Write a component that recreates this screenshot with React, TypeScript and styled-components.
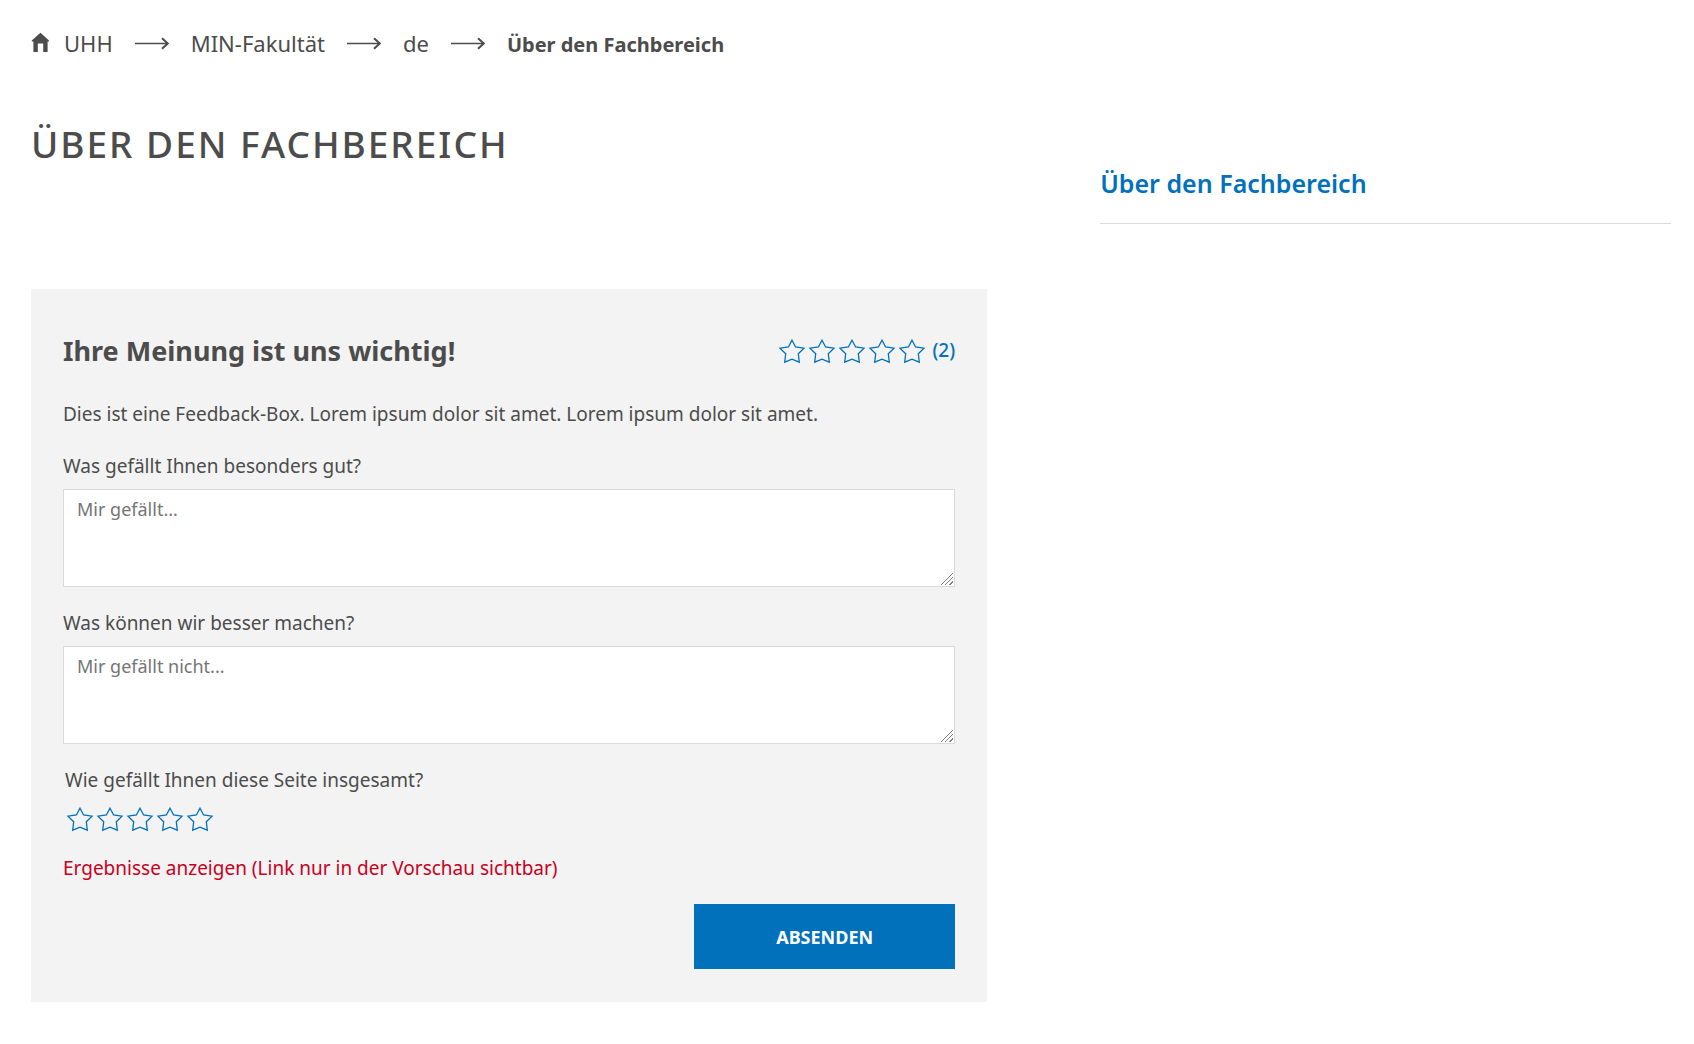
import React, { useState } from "react";
import styled, { createGlobalStyle } from "styled-components";

const color = {
  text: "#4c4c4c",
  blue: "#0271bb",
  red: "#c8001e",
  panel: "#f3f3f3",
  line: "#dadada",
  placeholder: "#757575",
};

const GlobalStyle = createGlobalStyle`
  *, *::before, *::after { box-sizing: border-box; }
  body {
    margin: 0;
    background: #fff;
    color: ${color.text};
    font-family: "Noto Sans", "Open Sans", sans-serif;
    font-size: 19px;
    line-height: 26px;
  }
`;

const Page = styled.div`
  padding: 27px 23px 42px 31px;
`;

const Breadcrumb = styled.nav`
  margin-bottom: 60px;
`;

const Crumbs = styled.ol`
  display: flex;
  flex-wrap: wrap;
  gap: 22px;
  margin: 0;
  padding: 0;
  list-style: none;
  font-size: 22px;
  line-height: 32px;
`;

const Crumb = styled.li`
  display: flex;
  align-items: center;
  gap: 22px;
`;

const CrumbLink = styled.a`
  display: flex;
  align-items: center;
  gap: 15px;
  color: inherit;
  text-decoration: none;
`;

const CurrentCrumb = styled.strong`
  font-size: 20px;
  line-height: 20px;
  font-weight: 700;
`;

const Icon = styled.svg`
  display: block;
  flex: none;
`;

const Columns = styled.div`
  display: grid;
  grid-template-columns: minmax(0, 67fr) minmax(0, 40fr);
  column-gap: 113px;
  align-items: start;
`;

const Title = styled.h1`
  margin: 0 0 120px;
  font-size: 37px;
  line-height: 50px;
  font-weight: 500;
  letter-spacing: 2px;
  text-transform: uppercase;
`;

const SideNav = styled.nav`
  padding-top: 48px;
`;

const SideLink = styled.a`
  display: block;
  padding-bottom: 24px;
  border-bottom: 1px solid ${color.line};
  color: ${color.blue};
  font-size: 25px;
  line-height: 32px;
  font-weight: 600;
  text-decoration: none;
`;

const FeedbackBox = styled.section`
  padding: 42px 32px 33px;
  background: ${color.panel};
`;

const BoxHeader = styled.header`
  display: flex;
  justify-content: space-between;
  align-items: center;
  margin-bottom: 30px;
`;

const BoxTitle = styled.h2`
  margin: 0;
  font-size: 27px;
  line-height: 40px;
  font-weight: 700;
`;

const Rating = styled.div`
  display: flex;
  align-items: center;
  height: 38px;
  padding-bottom: 2px;
  color: ${color.blue};
  font-weight: 500;
`;

const RatingCount = styled.span`
  margin-left: 5px;
`;

const Intro = styled.p`
  margin: 0 0 26px;
`;

const Form = styled.form`
  display: flex;
  flex-direction: column;
  align-items: stretch;
  gap: 23px;
`;

const Field = styled.div`
  display: flex;
  flex-direction: column;
  gap: 10px;
`;

const TextArea = styled.textarea`
  display: block;
  width: 100%;
  height: 98px;
  padding: 6px 13px;
  border: 1px solid ${color.line};
  border-radius: 0;
  background: #fff;
  color: ${color.text};
  font-family: inherit;
  font-size: 18px;
  line-height: 26px;
  resize: both;

  &::placeholder { color: ${color.placeholder}; }

  &::-webkit-resizer {
    background:
      linear-gradient(135deg, #fff 48%, transparent 48%),
      repeating-linear-gradient(315deg, #fff 0 2px, #808080 2px 3px);
    border: solid #fff;
    border-width: 0 1px 1px 0;
  }
`;

const StarField = styled.fieldset`
  margin: 0;
  padding: 0 2px;
  border: 0;
`;

const StarLegend = styled.legend`
  padding: 0;
  margin-bottom: 10px;
`;

const StarRow = styled.div`
  display: flex;
  height: 29px;
  color: ${color.blue};
`;

const StarOption = styled.label`
  position: relative;
  cursor: pointer;
`;

const StarInput = styled.input`
  position: absolute;
  inset: 0;
  width: 100%;
  height: 100%;
  margin: 0;
  opacity: 0;
  cursor: pointer;
`;

const ResultsLink = styled.a`
  align-self: flex-start;
  color: ${color.red};
  text-decoration: none;
`;

const SubmitButton = styled.button`
  align-self: flex-end;
  width: 261px;
  height: 65px;
  padding: 0;
  border: 0;
  background: ${color.blue};
  color: #fff;
  font-family: inherit;
  font-size: 18px;
  font-weight: 700;
  line-height: 26px;
  text-transform: uppercase;
  cursor: pointer;
`;

const HomeIcon = () => (
  <Icon width="18" height="22" viewBox="0 0 18 22" fill="currentColor" aria-hidden="true">
    <path d="M9.5 0.8 18.2 8.6V9.6H16.6V20H12.2V11.4H6.8V20H2.4V9.6H0.8V8.6Z" />
  </Icon>
);

const ArrowIcon = () => (
  <Icon width="34" height="14" viewBox="0 0 34 14" fill="none" stroke="currentColor" aria-hidden="true">
    <path d="M0 7.5H32.5" strokeWidth="1.4" />
    <path d="M27 2.2 32.8 7.5 27 12.8" strokeWidth="2" />
  </Icon>
);

const StarIcon = ({ filled = false }: { filled?: boolean }) => (
  <Icon
    width="30"
    height="30"
    viewBox="0 0 30 30"
    fill={filled ? "currentColor" : "none"}
    stroke="currentColor"
    strokeWidth="1.3"
    aria-hidden="true"
  >
    <path d="M15 5.2 18.6 12 27 13.2 21.3 18.8 22.3 27.2 15 24.2 7.7 27.2 8.7 18.8 3 13.2 11.4 12Z" />
  </Icon>
);

const STARS = [1, 2, 3, 4, 5];

const PARENTS = [
  { label: "UHH", home: true },
  { label: "MIN-Fakultät", home: false },
  { label: "de", home: false },
];

export default function App() {
  const [stars, setStars] = useState(0);

  return (
    <>
      <GlobalStyle />
      <Page>
        <Breadcrumb aria-label="Brotkrumen">
          <Crumbs>
            {PARENTS.map(({ label, home }) => (
              <Crumb key={label}>
                <CrumbLink href="#">
                  {home && <HomeIcon />}
                  {label}
                </CrumbLink>
                <ArrowIcon />
              </Crumb>
            ))}
            <li>
              <CurrentCrumb aria-current="page">Über den Fachbereich</CurrentCrumb>
            </li>
          </Crumbs>
        </Breadcrumb>

        <Columns>
          <main>
            <Title>Über den Fachbereich</Title>

            <FeedbackBox>
              <BoxHeader>
                <BoxTitle>Ihre Meinung ist uns wichtig!</BoxTitle>
                <Rating>
                  {STARS.map((n) => (
                    <StarIcon key={n} />
                  ))}
                  <RatingCount>(2)</RatingCount>
                </Rating>
              </BoxHeader>

              <Intro>
                Dies ist eine Feedback-Box. Lorem ipsum dolor sit amet. Lorem ipsum dolor sit amet.
              </Intro>

              <Form onSubmit={(event) => event.preventDefault()}>
                <Field>
                  <label htmlFor="likes">Was gefällt Ihnen besonders gut?</label>
                  <TextArea id="likes" placeholder="Mir gefällt..." />
                </Field>
                <Field>
                  <label htmlFor="dislikes">Was können wir besser machen?</label>
                  <TextArea id="dislikes" placeholder="Mir gefällt nicht..." />
                </Field>
                <StarField>
                  <StarLegend>Wie gefällt Ihnen diese Seite insgesamt?</StarLegend>
                  <StarRow>
                    {STARS.map((n) => (
                      <StarOption key={n}>
                        <StarInput
                          type="radio"
                          name="stars"
                          value={n}
                          aria-label={`${n} von 5 Sternen`}
                          checked={stars === n}
                          onChange={() => setStars(n)}
                        />
                        <StarIcon filled={n <= stars} />
                      </StarOption>
                    ))}
                  </StarRow>
                </StarField>
                <ResultsLink href="#">Ergebnisse anzeigen (Link nur in der Vorschau sichtbar)</ResultsLink>
                <SubmitButton type="submit">Absenden</SubmitButton>
              </Form>
            </FeedbackBox>
          </main>

          <SideNav aria-label="Bereich">
            <SideLink href="#">Über den Fachbereich</SideLink>
          </SideNav>
        </Columns>
      </Page>
    </>
  );
}
